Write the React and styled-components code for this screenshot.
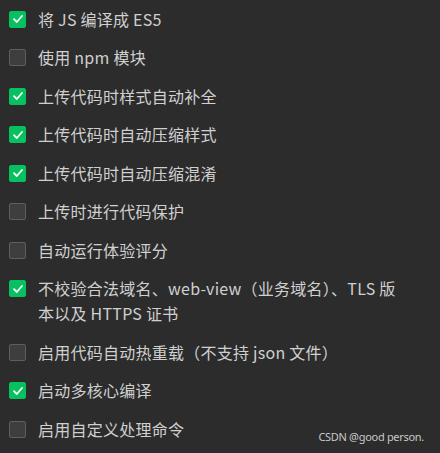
import React from 'react';
import styled, { createGlobalStyle } from 'styled-components';

const GlobalStyle = createGlobalStyle`
  html, body {
    margin: 0;
    padding: 0;
    background: #2c2c2c;
  }
  body {
    width: 440px;
    height: 453px;
    overflow: hidden;
    font-family: "Noto Sans CJK SC", "Noto Sans", sans-serif;
  }
`;

const Panel = styled.div`
  position: relative;
  width: 440px;
  height: 453px;
  background: #2c2c2c;
  box-sizing: border-box;
  padding: 0 9px;
`;

const List = styled.div`
  display: flex;
  flex-direction: column;
`;

const Row = styled.label`
  display: flex;
  align-items: flex-start;
  gap: 12px;
  padding: 6.75px 0;
  font-size: 16px;
  letter-spacing: 0.25px;
  line-height: 25px;
  color: #d0d0d0;
  cursor: pointer;
`;

const Box = styled.span`
  flex: none;
  width: 17px;
  height: 17px;
  margin-top: 4px;
  box-sizing: border-box;
  border-radius: 2px;
  display: flex;
  align-items: center;
  justify-content: center;
  background: ${(p) => (p.$checked ? '#07c160' : '#3e3e3e')};
  border: 1px solid ${(p) => (p.$checked ? '#07c160' : '#5e5e5e')};
`;

const Label = styled.span`
  flex: 1;
  padding-right: 32px;
`;

const Watermark = styled.div`
  position: absolute;
  right: 16px;
  bottom: 9px;
  font-family: "Noto Sans", sans-serif;
  font-size: 11px;
  letter-spacing: -0.3px;
  color: #c8c8c8;
`;

const items = [
  { text: '将 JS 编译成 ES5', checked: true },
  { text: '使用 npm 模块', checked: false },
  { text: '上传代码时样式自动补全', checked: true },
  { text: '上传代码时自动压缩样式', checked: true },
  { text: '上传代码时自动压缩混淆', checked: true },
  { text: '上传时进行代码保护', checked: false },
  { text: '自动运行体验评分', checked: false },
  { text: '不校验合法域名、web-view（业务域名）、TLS 版本以及 HTTPS 证书', checked: true },
  { text: '启用代码自动热重载（不支持 json 文件）', checked: false },
  { text: '启动多核心编译', checked: true },
  { text: '启用自定义处理命令', checked: false },
];

const Check = () => (
  <svg width="12" height="12" viewBox="0 0 12 12">
    <path d="M2 6.2 L4.8 9 L10 3" fill="none" stroke="#fff" strokeWidth="1.8" strokeLinecap="round" strokeLinejoin="round" />
  </svg>
);

const App = () => (
  <Panel>
    <GlobalStyle />
    <List>
      {items.map((item, i) => (
        <Row key={i}>
          <Box $checked={item.checked}>{item.checked && <Check />}</Box>
          <Label>{item.text}</Label>
        </Row>
      ))}
    </List>
    <Watermark>CSDN @good person.</Watermark>
  </Panel>
);

export default App;
